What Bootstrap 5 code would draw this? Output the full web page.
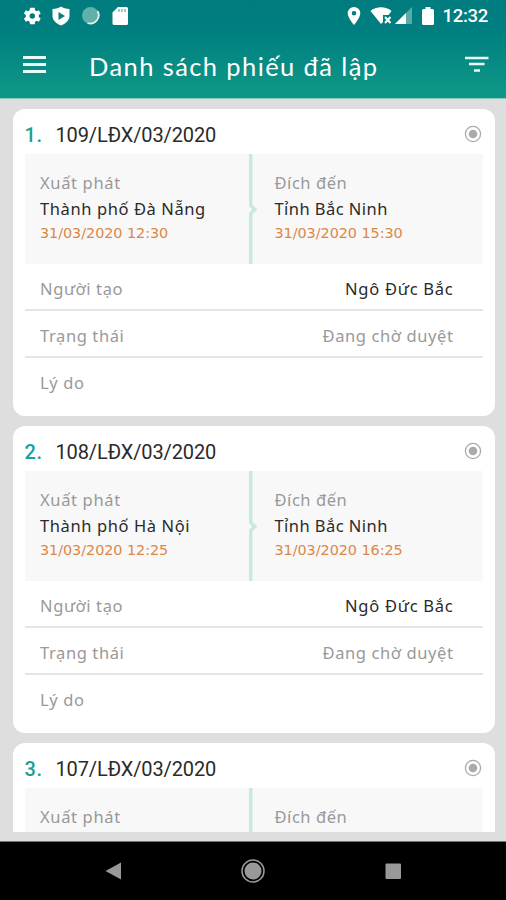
<!DOCTYPE html>
<html lang="vi">
<head>
<meta charset="utf-8">
<meta name="viewport" content="width=device-width, initial-scale=1">
<title>Danh sách phiếu đã lập</title>
<link href="https://cdn.jsdelivr.net/npm/bootstrap@5.3.0/dist/css/bootstrap.min.css" rel="stylesheet">
<style>
body{font-family:"Noto Sans","Liberation Sans",sans-serif;background:#dedede;letter-spacing:.3px}
svg{display:block;flex:none}
.screen{height:900px}
.app-head{height:99px;background:linear-gradient(#007c7f 0,#007f80 32%,#0d9686 92%);border-bottom:1px solid #8fcabf}
.status{height:32px;padding:0 18px 0 21px}
.moon,.sd{margin-left:10px}
.clock{font:500 18.5px/32px Roboto,sans-serif;letter-spacing:-.3px}
.title-bar{height:66px;padding:0 17px 0 22px}
.page-title{font:400 25.5px/66px Lato,sans-serif;letter-spacing:1.4px;margin-left:42px;padding-top:2px}
.feed{height:733px;padding:9.5px 11.5px 0 12.5px}
.slip{height:307px;margin-bottom:10px;border-radius:12px;padding:0 12px}
.slip-head{height:45px;padding:7px 1px 0 0}
.slip-head svg{margin-top:-1px}
.num{font:500 20px/38px Roboto,sans-serif;color:#1aa295;width:31px;letter-spacing:.6px}
.code{font:400 20px/38px Roboto,sans-serif;color:#2a2a2a;letter-spacing:-.12px}
.route{height:110px;background:#f8f8f8}
.stop{padding:16px 0 0 15.5px;line-height:26px}
.from{width:224px}
.to{padding-left:16px}
.lbl{color:#999;font-size:16.5px;letter-spacing:.65px}
.place{color:#2a2a2a;font-size:16.5px;letter-spacing:.6px}
.to .place{letter-spacing:.45px}
.to .lbl{letter-spacing:.55px}
.when{color:#dc8748;font:14.4px/22px "DejaVu Sans",sans-serif;letter-spacing:-.05px}
.info{height:47px;padding:6px 29px 0 15.5px;border-bottom:2px solid #e5e5e5}
.info .place{letter-spacing:.75px}
.info .lbl{letter-spacing:.6px}
.info:last-child{border:0;padding-top:4px}
.foot-strip{height:9px;background:#dedede}
.nav-keys{height:59px;background:#000;border-top:1px solid #777}
</style>
</head>
<body>
<svg width="0" height="0" class="position-absolute">
<symbol id="radio" viewBox="0 0 18 18"><circle cx="9" cy="9" r="7.6" fill="none" stroke="#aaa" stroke-width="1.3"/><circle cx="9" cy="9" r="4.3" fill="#aaa"/></symbol>
<symbol id="split" viewBox="0 0 10 110"><path d="M0 0H3.500V51L8.500 55.500L3.500 60V110H0V59L3 55.500L0 52Z" fill="#c8e9e3"/></symbol>
</svg>
<div class="screen d-flex flex-column overflow-hidden">
<header class="app-head text-white">
<div class="status d-flex align-items-center justify-content-between">
<div class="d-flex align-items-center">
<svg width="22" height="22" viewBox="0 0 24 24" fill="#fff"><path d="M19.400 13a7.800 7.800 0 0 0 0-2l2.100-1.700-2-3.500-2.500 1a7.700 7.700 0 0 0-1.700-1L15 3H9.900l-.5 2.800c-.6.200-1.200.6-1.700 1l-2.500-1-2 3.500L5.300 11a7.800 7.800 0 0 0 0 2l-2.100 1.700 2 3.500 2.500-1c.5.400 1.100.8 1.700 1l.5 2.800H15l.3-2.800c.6-.2 1.200-.6 1.700-1l2.500 1 2-3.500zM12.300 15a3 3 0 1 1 0-6 3 3 0 0 1 0 6z"/></svg>
<svg width="20" height="20" viewBox="0 0 20 20" class="ms-2"><path d="M10 .5C12 2 15 3 18.500 3v7c0 4-3.500 7.500-8.500 9.500C5 17.500 1.500 14 1.500 10V3C5 3 8 2 10 .5z" fill="#fff"/><path d="M7.500 6l6.500 4-6.500 4z" fill="#087f80"/></svg>
<svg width="20" height="20" viewBox="0 0 20 20" class="moon"><circle cx="9.500" cy="9.500" r="8.500" fill="#62b0ab"/><path d="M16.500 5a8.300 8.300 0 0 1-10 12" fill="none" stroke="#e5f4f1" stroke-width="1.800"/></svg>
<svg width="18" height="20" viewBox="0 0 18 20" class="sd"><path d="M7 1h8.500a1.500 1.500 0 0 1 1.500 1.500v15a1.500 1.500 0 0 1-1.500 1.500H3a1.500 1.500 0 0 1-1.500-1.500V6.500z" fill="#fff"/><path d="M8 3v3M11 3v3M14 3v3" stroke="#7fbab6" stroke-width="1.500"/></svg>
</div>
<div class="d-flex align-items-center">
<svg width="16" height="20" viewBox="0 0 16 20"><path d="M8 1a6.300 6.300 0 0 0-6.300 6.300C1.700 12 8 19 8 19s6.300-7 6.300-11.700A6.300 6.300 0 0 0 8 1zm0 8.500a2.300 2.300 0 1 1 0-4.600 2.300 2.300 0 0 1 0 4.600z" fill="#fff"/></svg>
<svg width="24" height="20" viewBox="0 0 24 20" class="ms-2"><path d="M.5 5C6 0 16 0 21.500 5l-3 4H13v7l-2 2z" fill="#fff"/><path d="M15 11l5.500 6M20.500 11l-5.500 6" stroke="#fff" stroke-width="2"/></svg>
<svg width="19" height="20" viewBox="0 0 19 20"><path d="M18 1V18H1z" fill="#5aaaa7"/><path d="M12 7v11H1z" fill="#fff"/></svg>
<svg width="14" height="20" viewBox="0 0 14 20" class="ms-2"><path d="M4.500 1h5v2h2q1.500 0 1.500 1.500v13q0 1.500-1.500 1.500h-9Q1 19 1 17.500v-13Q1 3 2.500 3h2z" fill="#fff"/></svg>
<span class="clock ms-2">12:32</span>
</div>
</div>
<div class="title-bar d-flex align-items-center">
<svg width="25" height="20" viewBox="0 0 25 20"><path d="M1 2.500h23M1 9.500h23M1 16.500h23" stroke="#e9fbf7" stroke-width="2.800"/></svg>
<h1 class="page-title mb-0">Danh sách phiếu đã lập</h1>
<svg width="25" height="18" viewBox="0 0 25 18" class="ms-auto"><path d="M1 2h23.500M5 8h15.500M10 14.500h6" stroke="#e9fbf7" stroke-width="2.600"/></svg>
</div>
</header>
<main class="feed overflow-hidden flex-shrink-0">
<article class="slip bg-white">
<div class="slip-head d-flex align-items-center"><span class="num">1.</span><span class="code">109/LĐX/03/2020</span><svg width="18" height="18" class="ms-auto"><use href="#radio"/></svg></div>
<div class="route d-flex">
<div class="stop from"><div class="lbl">Xuất phát</div><div class="place">Thành phố Đà Nẵng</div><div class="when">31/03/2020 12:30</div></div>
<svg width="10" height="110"><use href="#split"/></svg>
<div class="stop to"><div class="lbl">Đích đến</div><div class="place">Tỉnh Bắc Ninh</div><div class="when">31/03/2020 15:30</div></div>
</div>
<div class="info d-flex align-items-center justify-content-between"><span class="lbl">Người tạo</span><span class="place">Ngô Đức Bắc</span></div>
<div class="info d-flex align-items-center justify-content-between"><span class="lbl">Trạng thái</span><span class="lbl">Đang chờ duyệt</span></div>
<div class="info d-flex align-items-center"><span class="lbl">Lý do</span></div>
</article>
<article class="slip bg-white">
<div class="slip-head d-flex align-items-center"><span class="num">2.</span><span class="code">108/LĐX/03/2020</span><svg width="18" height="18" class="ms-auto"><use href="#radio"/></svg></div>
<div class="route d-flex">
<div class="stop from"><div class="lbl">Xuất phát</div><div class="place">Thành phố Hà Nội</div><div class="when">31/03/2020 12:25</div></div>
<svg width="10" height="110"><use href="#split"/></svg>
<div class="stop to"><div class="lbl">Đích đến</div><div class="place">Tỉnh Bắc Ninh</div><div class="when">31/03/2020 16:25</div></div>
</div>
<div class="info d-flex align-items-center justify-content-between"><span class="lbl">Người tạo</span><span class="place">Ngô Đức Bắc</span></div>
<div class="info d-flex align-items-center justify-content-between"><span class="lbl">Trạng thái</span><span class="lbl">Đang chờ duyệt</span></div>
<div class="info d-flex align-items-center"><span class="lbl">Lý do</span></div>
</article>
<article class="slip bg-white">
<div class="slip-head d-flex align-items-center"><span class="num">3.</span><span class="code">107/LĐX/03/2020</span><svg width="18" height="18" class="ms-auto"><use href="#radio"/></svg></div>
<div class="route d-flex">
<div class="stop from"><div class="lbl">Xuất phát</div></div>
<svg width="10" height="110"><use href="#split"/></svg>
<div class="stop to"><div class="lbl">Đích đến</div></div>
</div>
</article>
</main>
<div class="foot-strip flex-shrink-0"></div>
<nav class="nav-keys d-flex justify-content-center align-items-center flex-shrink-0">
<svg width="304" height="26" viewBox="0 0 304 26"><path d="M4.500 13L20 4.500v17z" fill="#999"/><circle cx="152" cy="13" r="11" fill="none" stroke="#999" stroke-width="1.500"/><circle cx="152" cy="13" r="8.500" fill="#999"/><rect x="284.500" y="5.500" width="15.500" height="15.500" rx="1" fill="#999"/></svg>
</nav>
</div>
<script src="https://cdn.jsdelivr.net/npm/bootstrap@5.3.0/dist/js/bootstrap.bundle.min.js"></script>
</body>
</html>
